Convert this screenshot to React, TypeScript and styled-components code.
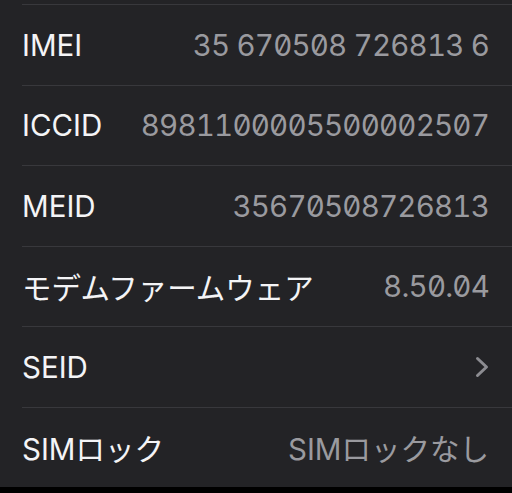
import React from "react";
import styled, { createGlobalStyle } from "styled-components";

const GlobalStyle = createGlobalStyle`
  html, body {
    margin: 0;
    padding: 0;
    background: #000;
  }
  body {
    font-family: "Inter", "Noto Sans CJK JP", sans-serif;
    -webkit-font-smoothing: antialiased;
  }
`;

interface InfoRow {
  label: string;
  value?: string;
  digits?: boolean;
  link?: boolean;
}

const rows: InfoRow[] = [
  { label: "IMEI", value: "35 670508 726813 6", digits: true },
  { label: "ICCID", value: "8981100005500002507", digits: true },
  { label: "MEID", value: "35670508726813", digits: true },
  { label: "モデムファームウェア", value: "8.50.04", digits: true },
  { label: "SEID", link: true },
  { label: "SIMロック", value: "SIMロックなし" },
];

const Card = styled.div`
  width: 512px;
  height: 487px;
  box-sizing: border-box;
  padding-top: 4px;
  background: #232326;
  display: grid;
  grid-template-rows: repeat(6, 1fr);
`;

const Row = styled.div`
  margin-left: 22px;
  padding-right: 23px;
  border-top: 1px solid #38383c;
  display: flex;
  align-items: center;
  justify-content: space-between;
  gap: 12px;
`;

const Label = styled.span`
  font-size: 29.5px;
  color: #f4f4f6;
  white-space: nowrap;
`;

const Value = styled.span<{ $digits?: boolean }>`
  font-size: 29.5px;
  color: #9a9a9f;
  white-space: nowrap;
  font-feature-settings: ${(p) => (p.$digits ? '"tnum", "zero"' : "normal")};
  letter-spacing: ${(p) => (p.$digits ? "-0.8px" : "0")};
`;

const Chevron = styled.svg`
  width: 14px;
  height: 22px;
  display: block;
`;

const App: React.FC = () => {
  return (
    <>
      <GlobalStyle />
      <Card>
        {rows.map((row) => (
          <Row key={row.label}>
            <Label>{row.label}</Label>
            {row.link ? (
              <Chevron viewBox="0 0 14 22">
                <polyline
                  points="2.5,2.5 11.5,11 2.5,19.5"
                  fill="none"
                  stroke="#8c8c91"
                  strokeWidth="3"
                  strokeLinecap="round"
                  strokeLinejoin="round"
                />
              </Chevron>
            ) : (
              <Value $digits={row.digits}>{row.value}</Value>
            )}
          </Row>
        ))}
      </Card>
    </>
  );
};

export default App;
